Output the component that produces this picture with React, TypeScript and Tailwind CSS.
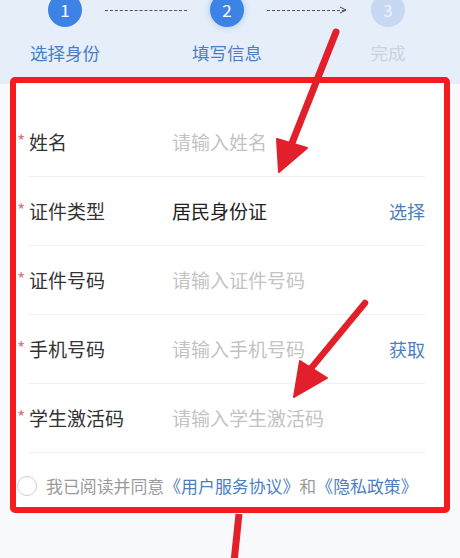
import React from "react";

const font = { fontFamily: '"Noto Sans CJK SC", "Noto Sans", sans-serif' };

function Row({ label, value, placeholder, action }: { label: string; value?: string; placeholder?: string; action?: string }) {
  return (
    <div className="ml-[13px] mr-[19px] h-[69px] flex items-center border-b border-[#efefef]">
      <div className="w-[155px] -ml-[12px] flex items-center">
        <span className="w-[12px] text-[18px] leading-none text-[#d97a88] mt-[-4px]">*</span>
        <span className="text-[19px] text-[#333333]">{label}</span>
      </div>
      <div className={"flex-1 text-[19px] " + (value ? "text-[#222222]" : "text-[#c3c3c3]")}>{value ?? placeholder}</div>
      {action && <div className="text-[18px] text-[#4d7fbf]">{action}</div>}
    </div>
  );
}

export default function App() {
  return (
    <div className="relative w-[460px] h-[558px] overflow-hidden bg-[#f7f9fb]" style={font}>
      <div className="absolute left-0 top-0 w-[460px] h-[84px] bg-[#e5eef9]" />
      <div className="relative">
        {/* steps */}
        <div className="flex items-center pl-[48px] mt-[-7px] h-[34px]">
          <div className="w-[34px] h-[34px] rounded-full bg-[#3d83e6] text-white text-[17px] flex items-center justify-center">1</div>
          <div className="ml-[23px] w-[82px] border-t border-dashed border-[#555]" />
          <div className="ml-[23px] w-[34px] h-[34px] rounded-full bg-[#3d83e6] text-white text-[17px] flex items-center justify-center shadow-[0_0_6px_rgba(61,131,230,0.4)]">2</div>
          <div className="ml-[23px] w-[80px] relative flex items-center">
            <div className="w-[78px] border-t border-dashed border-[#555]" />
            <svg width="8" height="8" viewBox="0 0 8 8" className="absolute right-0 top-[-4px]">
              <path d="M1 1 L7 4 L1 7" fill="none" stroke="#444" strokeWidth="1" />
            </svg>
          </div>
          <div className="ml-[24px] w-[34px] h-[34px] rounded-full bg-[#c7d8f2] text-[#edf3fc] text-[17px] flex items-center justify-center">3</div>
        </div>
        <div className="flex pl-[5px] mt-[11px] h-[30px] items-center">
          <div className="w-[120px] text-center text-[17.5px] text-[#4a7fc6]">选择身份</div>
          <div className="ml-[42px] w-[120px] text-center text-[17.5px] text-[#4a7fc6]">填写信息</div>
          <div className="ml-[41px] w-[120px] text-center text-[17.5px] text-[#c9d4e0]">完成</div>
        </div>

        {/* red box */}
        <div className="ml-[10px] mt-[9px] w-[440px] h-[436px] border-[6px] border-[#f41c1c] rounded-[5px] bg-white">
          <div className="pt-[25px]">
            <Row label="姓名" placeholder="请输入姓名" />
            <Row label="证件类型" value="居民身份证" action="选择" />
            <Row label="证件号码" placeholder="请输入证件号码" />
            <Row label="手机号码" placeholder="请输入手机号码" action="获取" />
            <Row label="学生激活码" placeholder="请输入学生激活码" />
          </div>
          <div className="flex items-center ml-[1px] mt-[20px]">
            <div className="w-[20px] h-[20px] rounded-full border-[1.5px] border-[#cfcfcf]" />
            <div className="ml-[9px] text-[16.9px] text-[#9a9a9a] whitespace-nowrap">
              我已阅读并同意<span className="text-[#4d7fbf]">《用户服务协议》</span>和<span className="text-[#4d7fbf]">《隐私政策》</span>
            </div>
          </div>
        </div>
      </div>

      {/* annotation arrows */}
      <svg className="absolute left-0 top-0" width="460" height="558" viewBox="0 0 460 558">
        <g fill="#e2202b" stroke="#e2202b" strokeLinecap="round" strokeLinejoin="round">
          <line x1="336" y1="32" x2="290" y2="148" strokeWidth="7" />
          <polygon points="279,172 277,139 307,148" strokeWidth="2" />
          <line x1="365" y1="303" x2="308" y2="372" strokeWidth="6.5" />
          <polygon points="294,397 300,361 327,378" strokeWidth="2" />
          <line x1="239" y1="514" x2="234" y2="562" strokeWidth="7" strokeLinecap="butt" />
        </g>
      </svg>
    </div>
  );
}
